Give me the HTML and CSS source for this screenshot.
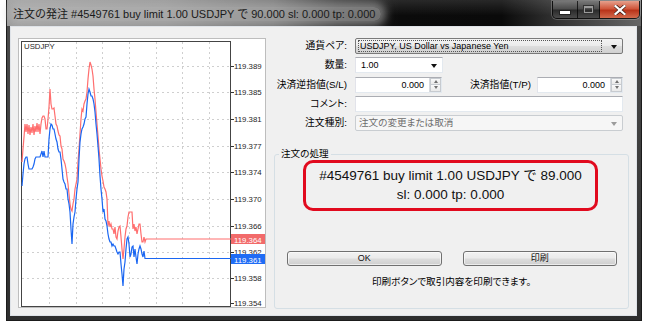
FILE: index.html
```html
<!DOCTYPE html>
<html lang="ja">
<head>
<meta charset="utf-8">
<title>注文の発注</title>
<link rel="stylesheet" href="styles.css">
</head>
<body>
<div class="window">
  <div class="titlebar">
    <span class="title">注文の発注 #4549761 buy limit 1.00 USDJPY で 90.000 sl: 0.000 tp: 0.000</span>
    <div class="caption">
      <span class="cbtn min"><i class="g-min"></i></span>
      <span class="cbtn max"><i class="g-max"></i></span>
      <span class="cbtn close">
        <svg width="12" height="10" viewBox="0 0 12 10"><path d="M1.5 1 L10.5 9 M10.5 1 L1.5 9" stroke="#3a1a12" stroke-width="3.6" stroke-linecap="square"/><path d="M1.5 1 L10.5 9 M10.5 1 L1.5 9" stroke="#fff" stroke-width="2.2" stroke-linecap="square"/></svg>
      </span>
    </div>
  </div>
  <div class="frame">
    <div class="client">
      <div class="chartbox">
        <svg class="chart" width="246" height="268" viewBox="19 40 246 268">
          <g stroke="#cfcfcf" stroke-width="1" stroke-dasharray="2 3" fill="none">
            <path d="M49.5 43V307M76.5 43V307M102.5 43V307M129.5 43V307M156.5 43V307M182.5 43V307M209.5 43V307"/>
            <path d="M22 67.5H230M22 93.5H230M22 120.5H230M22 147.5H230M22 173.5H230M22 200.5H230M22 227.5H230M22 253.5H230M22 279.5H230"/>
          </g>
          <rect x="21.5" y="42.5" width="209" height="265" fill="none" stroke="#444"/>
          <path d="M231 67.5h3M231 93.5h3M231 120.5h3M231 147.5h3M231 173.5h3M231 200.5h3M231 227.5h3M231 253.5h3M231 279.5h3M231 304.5h3" stroke="#333"/>
          <polyline class="ask" fill="none" points="22,163 23,150 24,138 25,125 26,133 27,125 28,135 29,126 30,136 31,128 32,134 33,125 34,136 35,127 36,133 37,124 38,133 39,125 40,135 41,125 42,119 43,117 44,117 45,120 46,130 47,130 48,120 49,108 50,90 51,105 52,110 53,110 54,109 55,117 56,125 57,127 58,132 59,136 60,137 61,147 62,150 63,160 64,162 65,165 66,170 67,178 68,185 69,195 70,205 71,210 72,212 73,205 74,200 75,190 76,185 77,180 78,163 79,150 80,135 81,120 82,110 83,112 84,105 85,102 86,100 87,93 88,80 89,70 90,63 91,66 92,70 93,77 94,90 95,100 96,113 97,125 98,137 99,150 100,160 101,170 102,177 103,182 104,188 105,190 106,193 107,200 108,227 109,222 110,228 111,225 112,230 113,230 114,235 115,228 116,238 117,240 118,232 119,228 120,227 121,238 122,250 123,260 124,250 125,238 126,230 127,227 128,218 129,213 130,213 131,213 132,213 133,230 134,225 135,232 136,228 137,235 138,230 139,225 140,225 141,235 142,243 143,243 144,238 145,243 146,240 147,240 231,240"/>
          <polyline class="bid" fill="none" points="22,187 23,175 24,165 25,160 26,158 27,158 28,165 29,170 30,170 31,170 32,170 33,168 34,165 35,160 36,158 37,158 38,158 39,158 40,158 41,155 42,152 43,158 44,152 45,158 46,158 47,158 48,158 49,140 50,130 51,125 52,126 53,130 54,130 55,135 56,140 57,143 58,150 59,153 60,153 61,160 62,170 63,180 64,183 65,185 66,190 67,190 68,200 69,205 70,213 71,230 72,245 73,225 74,218 75,213 76,200 77,190 78,183 79,160 80,143 81,135 82,130 83,128 84,125 85,120 86,118 87,105 88,95 89,90 90,93 91,97 92,97 93,100 94,105 95,113 96,125 97,135 98,147 99,160 100,177 101,190 102,200 103,213 104,210 105,220 106,222 107,227 108,235 109,240 110,243 111,243 112,247 113,245 114,247 115,247 116,250 117,253 118,255 119,253 120,253 121,265 122,275 123,287 124,270 125,263 126,250 127,240 128,238 129,245 130,258 131,255 132,248 133,247 134,258 135,250 136,258 137,265 138,255 139,250 140,247 141,250 142,255 143,258 144,252 145,259.5 231,259.5"/>
          <text class="sym" x="24" y="50">USDJPY</text>
          <g class="prices">
            <text x="234" y="70">119.389</text>
            <text x="234" y="96">119.385</text>
            <text x="234" y="123">119.381</text>
            <text x="234" y="150">119.377</text>
            <text x="234" y="176">119.374</text>
            <text x="234" y="203">119.370</text>
            <text x="234" y="230">119.366</text>
            <text x="234" y="256">119.362</text>
            <text x="234" y="282">119.358</text>
            <text x="234" y="307">119.354</text>
          </g>
          <rect x="231" y="235" width="34" height="10" fill="#f26a6a"/>
          <text class="badge" x="234" y="243.5">119.364</text>
          <rect x="231" y="255" width="35" height="10" fill="#1f6cf5"/>
          <text class="badge" x="234" y="263.5">119.361</text>
        </svg>
      </div>
      <div class="side">
        <div class="form">
          <span class="lbl">通貨ペア:</span>
          <div class="combo combo-sym"><span class="focus">USDJPY, US Dollar vs Japanese Yen</span><span class="arrow"></span></div>
          <span class="lbl">数量:</span>
          <div class="cell"><div class="combo combo-vol"><span class="txt">1.00</span><span class="arrow"></span></div></div>
          <span class="lbl">決済逆指値(S/L)</span>
          <div class="cell sltp">
            <div class="spin sl"><span class="val">0.000</span><span class="spbtns"><i class="up"></i><i class="down"></i></span></div>
            <span class="lbl2">決済指値(T/P)</span>
            <div class="spin tp"><span class="val">0.000</span><span class="spbtns"><i class="up"></i><i class="down"></i></span></div>
          </div>
          <span class="lbl">コメント:</span>
          <div class="edit"></div>
          <span class="lbl">注文種別:</span>
          <div class="combo combo-dis"><span class="txt">注文の変更または取消</span><span class="arrow"></span></div>
        </div>
        <fieldset class="group">
          <legend>注文の処理</legend>
          <div class="result">#4549761 buy limit 1.00 USDJPY で 89.000<br>sl: 0.000 tp: 0.000</div>
          <div class="btns"><button class="btn">OK</button><button class="btn">印刷</button></div>
          <p class="note">印刷ボタンで取引内容を印刷できます。</p>
        </fieldset>
      </div>
    </div>
  </div>
</div>
</body>
</html>
```
FILE: styles.css
```css
* { box-sizing: border-box; }
html, body { margin: 0; padding: 0; background: #fff; }
body {
  font-family: "Liberation Sans", "Noto Sans CJK JP", sans-serif;
  color: #000;
}

.window {
  margin-left: 6px;
  width: 636px;
  height: 321px;
  display: flex;
  flex-direction: column;
  background: #383838;
  border: 1px solid #1b1b1b;
  border-top: none;
}

.titlebar {
  height: 26px;
  flex: none;
  display: flex;
  align-items: flex-start;
  padding-left: 5px;
  background:
    linear-gradient(to bottom, rgba(255,255,255,0.12), rgba(255,255,255,0) 60%),
    linear-gradient(to right, #9a9a9a 0%, #8c8c8c 25%, #6a6a6a 42%, #2a2a2a 52%, #0b0b0b 62%, #0a0a0a 78%, #2f2f2f 86%, #666 100%);
}
.title {
  margin-top: 7px;
  font-size: 11px;
  line-height: 14px;
  color: #1a1a1a;
  white-space: nowrap;
  padding: 0 6px 0 1px;
  border-radius: 8px;
  background: rgba(190,190,190,0.55);
  box-shadow: 0 0 8px 5px rgba(190,190,190,0.55);
}

.caption {
  margin: 1px 1px 0 auto;
  display: flex;
  height: 18px;
  border: 1px solid rgba(0,0,0,0.75);
  border-top: none;
  border-radius: 0 0 5px 5px;
  overflow: hidden;
  box-shadow: 0 0 0 1px rgba(255,255,255,0.22);
}
.cbtn {
  display: flex;
  align-items: center;
  justify-content: center;
  height: 100%;
}
.cbtn.min, .cbtn.max {
  background: linear-gradient(to bottom, #777 0%, #4b4b4b 48%, #2a2a2a 52%, #4a4a4a 100%);
  border-right: 1px solid rgba(0,0,0,0.7);
}
.cbtn.min { width: 25px; }
.cbtn.max { width: 22px; }
.cbtn.close {
  width: 39px;
  background: linear-gradient(to bottom, #e6a08c 0%, #d0573c 45%, #b9341a 55%, #d26a4c 100%);
}
.g-min {
  display: block;
  width: 10px;
  height: 3px;
  margin-top: 6px;
  background: #fff;
  box-shadow: 0 0 0 1px #222;
}
.g-max {
  display: block;
  width: 9px;
  height: 7px;
  border: 1px solid #9a9a9a;
  border-top-width: 2px;
  box-shadow: 0 0 0 1px #333;
}

.frame {
  flex: 1;
  padding: 0 4px 4px 3px;
  background: linear-gradient(to bottom, #4a4a4a, #2e2e2e);
}
.client {
  height: 100%;
  background: #f0f0f0;
  border: 1px solid #dfe3e8;
  padding: 11px 7px 6px 7px;
  display: grid;
  grid-template-columns: 248px 1fr;
  column-gap: 8px;
}

.chartbox {
  width: 248px;
  height: 270px;
  background: #fff;
  border: 1px solid #bdbdbd;
}
.chart { display: block; }
.chart .ask { stroke: #ff6e6e; stroke-width: 1.2; }
.chart .bid { stroke: #1a66f2; stroke-width: 1.2; }
.chart text {
  font-family: "Liberation Sans", sans-serif;
  font-size: 7.8px;
  fill: #1e1e1e;
}
.chart .badge { fill: #fff; }

.side {
  display: flex;
  flex-direction: column;
}
.form {
  display: grid;
  grid-template-columns: 73px 268px;
  grid-auto-rows: 16px;
  column-gap: 8px;
  row-gap: 3.25px;
}
.lbl, .lbl2 {
  font-size: 9.8px;
  line-height: 16px;
  white-space: nowrap;
  font-feature-settings: "palt";
}
.lbl {
  display: flex;
  justify-content: flex-end;
}
.cell { display: flex; }

.combo {
  position: relative;
  height: 16px;
  font-size: 9px;
  line-height: 14px;
  display: flex;
  align-items: center;
}
.combo .arrow {
  position: absolute;
  right: 5px;
  top: 6px;
  width: 0;
  height: 0;
  border-left: 3.5px solid transparent;
  border-right: 3.5px solid transparent;
  border-top: 4px solid #111;
}
.combo-sym {
  border: 1px solid #7a7a7a;
  border-radius: 2px;
  background: linear-gradient(to bottom, #f3f3f3 0%, #ebebeb 48%, #dddddd 52%, #d0d0d0 100%);
  padding: 1px 20px 1px 2px;
}
.combo-sym .focus {
  flex: 1;
  height: 12px;
  line-height: 11px;
  border: 1px dotted #555;
  padding-left: 1px;
}
.combo-vol {
  width: 88px;
  background: #fff;
  border: 1px solid;
  border-color: #abadb3 #e3e9ef #e3e9ef #e2e3ea;
  padding-left: 5px;
}
.combo-dis {
  background: #f6f6f6;
  border: 1px solid #c9cdd1;
  border-radius: 2px;
  padding-left: 3px;
  color: #6d6d6d;
  font-size: 9.6px;
}
.combo-dis .txt { font-feature-settings: "palt"; }
.combo-dis .arrow { border-top-color: #9c9c9c; }

.edit {
  background: #fff;
  border: 1px solid;
  border-color: #abadb3 #e3e9ef #e3e9ef #e2e3ea;
}

.sltp { align-items: stretch; }
.spin {
  display: flex;
  background: #fff;
  border: 1px solid;
  border-color: #abadb3 #e3e9ef #e3e9ef #e2e3ea;
}
.spin.sl { width: 87px; }
.spin.tp { width: 86px; margin-left: auto; }
.spin .val {
  flex: 1;
  text-align: right;
  font-size: 9px;
  line-height: 14px;
  padding-right: 5px;
}
.spbtns {
  width: 12px;
  display: flex;
  flex-direction: column;
  border-left: 1px solid #d6d9de;
}
.spbtns i {
  flex: 1;
  display: flex;
  align-items: center;
  justify-content: center;
  background: linear-gradient(to bottom, #fafafa, #e9e9e9);
  border: 1px solid #c7cbd0;
}
.spbtns i + i { border-top: none; }
.spbtns .up::after {
  content: "";
  border-left: 2.5px solid transparent;
  border-right: 2.5px solid transparent;
  border-bottom: 3px solid #707070;
}
.spbtns .down::after {
  content: "";
  border-left: 2.5px solid transparent;
  border-right: 2.5px solid transparent;
  border-top: 3px solid #707070;
}
.lbl2 { margin-left: 28px; }

.group {
  flex: 1;
  margin: 17px 0 0 0;
  padding: 0;
  border: 1px solid #d5dfe5;
  border-radius: 3px;
  display: flex;
  flex-direction: column;
  min-width: 0;
}
.group legend {
  margin-left: 4px;
  padding: 0 2px;
  font-size: 9.6px;
  line-height: 12px;
  font-feature-settings: "palt";
}
.result {
  margin: 0 30px 0 28px;
  height: 51px;
  border: 3px solid #e10a1e;
  border-radius: 10px;
  text-align: center;
  font-size: 13.5px;
  line-height: 19px;
  padding-top: 3px;
  color: #111;
}
.btns {
  display: flex;
  gap: 21px;
  margin-top: 40px;
  padding: 0 11px 0 12px;
}
.btn {
  flex: 1;
  height: 15px;
  padding: 0;
  margin: 0;
  font-family: "Liberation Sans", "Noto Sans CJK JP", sans-serif;
  font-size: 9px;
  line-height: 13px;
  color: #111;
  border: 1px solid #707070;
  border-radius: 3px;
  background: linear-gradient(to bottom, #f2f2f2 0%, #ebebeb 48%, #dddddd 52%, #cfcfcf 100%);
  box-shadow: inset 0 0 0 1px rgba(255,255,255,0.6);
}
.note {
  margin: 10px 0 0 0;
  text-align: center;
  font-size: 9.6px;
  line-height: 12px;
  font-feature-settings: "palt";
}
```
